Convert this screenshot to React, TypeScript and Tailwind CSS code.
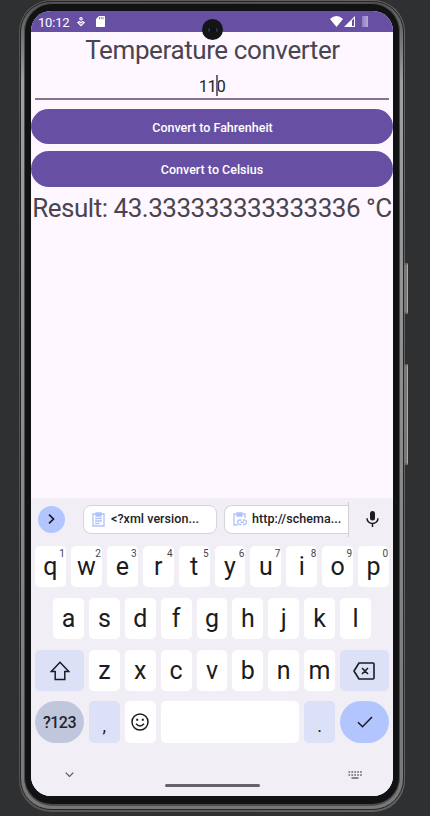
import type { ReactNode } from 'react';

const topRow = ['q', 'w', 'e', 'r', 't', 'y', 'u', 'i', 'o', 'p'];
const homeRow = ['a', 's', 'd', 'f', 'g', 'h', 'j', 'k', 'l'];
const lowRow = ['z', 'x', 'c', 'v', 'b', 'n', 'm'];

function Key({ label, hint }: { label: string; hint?: string }) {
  return (
    <div className="relative flex h-[41px] min-w-0 flex-1 items-center justify-center rounded-[5px] bg-white text-[25px] leading-none text-[#1b1b20]">
      <span>{label}</span>
      {hint && <span className="absolute right-[1px] top-[3px] text-[10px] leading-none text-[#44464e]">{hint}</span>}
    </div>
  );
}

function StatusBar() {
  return (
    <div className="relative flex h-[21px] shrink-0 items-center bg-[#6750a4] pl-[7px] text-white">
      <span className="w-[32px] whitespace-nowrap pt-px text-[13px] leading-none tracking-[-0.200px]">10:12</span>
      <svg className="ml-[7px] h-[10px] w-[8px]" viewBox="0 0 8 10" fill="none" stroke="white" strokeWidth="1.1">
        <circle cx="4" cy="1.8" r="1.2" />
        <path d="M4 6 2.4 4.5 .8 5.5 4 8.7 7.2 5.5 5.6 4.5Z" />
      </svg>
      <svg className="ml-[11px] h-[11px] w-[9px]" viewBox="0 0 9 11">
        <path d="M3 0h5.3q.7 0 .7.7v9.6q0 .7-.7.7H.7Q0 11 0 10.300V3Z" fill="white" />
        <path d="M3.500 1.200v2M5.300 1.200v2M7.100 1.200v2" stroke="#6750a4" strokeWidth=".8" />
      </svg>
      <div className="absolute left-[171px] top-[8px] flex h-[21px] w-[21px] items-center justify-center rounded-full bg-[#151518]">
        <span className="h-[4px] w-[10px] rounded-full border-x-2 border-[#263850] bg-[#0d1119]" />
      </div>
      <svg className="ml-auto h-[11px] w-[13px]" viewBox="0 0 13 11"><path d="M0 3Q6.500-3 13 3L6.500 11Z" fill="white" /></svg>
      <svg className="ml-[1px] h-[11px] w-[11px]" viewBox="0 0 11 11">
        <path d="M0 11 11 0v11Z" fill="white" /><path d="M8 4.500 10 2.500V10H8Z" fill="#6750a4" />
      </svg>
      <div className="ml-[7px] mr-[25px] h-[11px] w-[6px] bg-gradient-to-r from-[#917fc2] to-[#b5a8d8]" />
    </div>
  );
}

function Clip({ link = false }: { link?: boolean }) {
  return (
    <svg className="h-[15px] w-[14px] shrink-0" viewBox="0 0 14 15" fill="none" stroke="#afc3fc" strokeWidth="1.300">
      {link ? (
        <>
          <path d="M4.500 13H1V2h2.500M9.500 2H12v4" />
          <path d="M4 1h5v3H4Z" fill="#afc3fc" />
          <path d="M8.500 8H6.800a2.200 2.200 0 0 0 0 4.500h1.700M10 8h1.300a2.200 2.200 0 0 1 0 4.500H10M7.500 10.250h3.500" />
        </>
      ) : (
        <>
          <path d="M1 2h11v12H1Z" />
          <path d="M4 1h5v3H4Z" fill="#afc3fc" />
          <path d="M3 6.500h7M3 9h7M3 11.500h4.500" />
        </>
      )}
    </svg>
  );
}

function ActionKey({ children }: { children: ReactNode }) {
  return <div className="flex h-[41px] w-[49px] shrink-0 items-center justify-center rounded-[5px] bg-[#dce1f8]">{children}</div>;
}

function Keyboard() {
  return (
    <div className="flex h-[298px] shrink-0 flex-col bg-[#f1eff5]">
      <div className="flex h-[42px] shrink-0 items-center pl-[7px]">
        <div className="flex h-[27px] w-[27px] shrink-0 items-center justify-center rounded-full bg-[#b2c5ff]">
          <svg className="h-[10px] w-[7px]" viewBox="0 0 7 10" fill="none" stroke="#1b1b20" strokeWidth="1.700"><path d="m1 .7 4.500 4.300L1 9.300" /></svg>
        </div>
        <div className="ml-[18px] flex h-[29px] w-[134px] shrink-0 items-center rounded-[8px] border border-[#d5d4dc] bg-white pl-[8px]">
          <Clip />
          <span className="ml-[5px] whitespace-nowrap pt-px text-[12.500px] font-medium tracking-[0.050px] text-[#202126]">&lt;?xml version...</span>
        </div>
        <div className="ml-[7px] flex h-[35px] w-[125px] shrink-0 items-center border-r border-[#d0cfd6]">
          <div className="flex h-[29px] w-full items-center rounded-l-[8px] border border-r-0 border-[#d5d4dc] bg-white pl-[8px]">
            <Clip link />
            <span className="ml-[5px] whitespace-nowrap pt-px text-[12.500px] font-medium tracking-[0.050px] text-[#202126]">http://schema...</span>
          </div>
        </div>
        <svg className="ml-[17px] h-[16px] w-[13px]" viewBox="0 0 13 16">
          <rect x="4" y="0" width="5" height="9.500" rx="2.500" fill="#1b1b20" />
          <path d="M1 7.200a5.500 5.300 0 0 0 11 0M6.500 12.500V16" fill="none" stroke="#1b1b20" strokeWidth="1.500" />
        </svg>
      </div>

      <div className="mt-[6px] flex gap-[5px] px-[4px]">
        {topRow.map((k, i) => <Key key={k} label={k} hint={String((i + 1) % 10)} />)}
      </div>
      <div className="mt-[11px] flex gap-[5px] px-[22px]">
        {homeRow.map((k) => <Key key={k} label={k} />)}
      </div>
      <div className="mt-[11px] flex gap-[5px] px-[4px]">
        <ActionKey>
          <svg className="h-[20px] w-[20px]" viewBox="0 0 20 20" fill="none" stroke="#1b1b20" strokeWidth="1.500"><path d="M10 1.300 18.700 10.400H14.800V18.500H5.200V10.400H1.300Z" /></svg>
        </ActionKey>
        {lowRow.map((k) => <Key key={k} label={k} />)}
        <ActionKey>
          <svg className="mr-[2px] h-[18px] w-[22px]" viewBox="0 0 22 18" fill="none" stroke="#1b1b20" strokeWidth="1.600" strokeLinejoin="round">
            <path d="M6 1H20Q21 1 21 2V16Q21 17 20 17H6L1 9ZM9 6l6 6M15 6l-6 6" />
          </svg>
        </ActionKey>
      </div>
      <div className="mt-[10px] flex h-[42px] gap-[5px] px-[4px]">
        <div className="flex w-[49px] items-center justify-center rounded-[21px] bg-[#c0c6dc] pt-[2px] text-[16px] font-medium tracking-[-0.500px] text-[#202331]">?123</div>
        <div className="flex w-[30.500px] items-end justify-center rounded-[5px] bg-[#dce1f8] pb-[8px] text-[18px] leading-none text-[#1b1b20]">,</div>
        <div className="flex w-[31px] items-center justify-center rounded-[5px] bg-white">
          <svg className="h-[18px] w-[18px]" viewBox="0 0 18 18" fill="none" stroke="#1b1b20" strokeWidth="1.500">
            <circle cx="9" cy="9" r="8" /><path d="M5 10.800q4 4.400 8 0" /><path d="M5.200 6.700h2M10.800 6.700h2" strokeWidth="2" />
          </svg>
        </div>
        <div className="flex-1 rounded-[5px] bg-white" />
        <div className="flex w-[31px] items-end justify-center rounded-[5px] bg-[#dce1f8] pb-[8px] text-[18px] leading-none text-[#1b1b20]">.</div>
        <div className="flex w-[49px] items-center justify-center rounded-[21px] bg-[#b2c5ff]">
          <svg className="h-[12px] w-[16px]" viewBox="0 0 16 12" fill="none" stroke="#1b1b20" strokeWidth="1.600"><path d="m1 6.200 4.500 4.500L15 1" /></svg>
        </div>
      </div>
      <div className="flex flex-1 pl-[34px] pr-[31px]">
        <svg className="mt-[29px] h-[6px] w-[9px]" viewBox="0 0 9 6" fill="none" stroke="#55555b" strokeWidth="1.200"><path d="m.7.7 3.800 3.800L8.300.7" /></svg>
        <div className="mt-[41px] ml-[91px] h-[3px] w-[95px] rounded-full bg-[#656369]" />
        <svg className="mt-[28px] ml-auto h-[8px] w-[14px]" viewBox="0 0 14 8" stroke="#66656b">
          <path d="M.5 1H14M.5 4H14" strokeWidth="1.700" strokeDasharray="1.700 1.200" /><path d="M3.500 7h7" strokeWidth="1.300" />
        </svg>
      </div>
    </div>
  );
}

export default function App() {
  return (
    <main className="relative h-[816px] w-[430px] overflow-hidden bg-[#2f3032] pl-[19px] font-['Roboto',sans-serif]">
      <div className="h-[812px] w-[386px] rounded-[32px] bg-linear-to-r from-[#555555] to-[#626262] p-[1px] pb-[2px]">
        <div className="h-full rounded-[31px] border-[1px] border-[#252525] bg-linear-to-b from-[#555555] via-[#a0a0a0] via-10% to-[#777777] pt-[1px] pr-[3px] pb-[3px] pl-[3px]">
          <div className="h-full rounded-[28px] border-[1px] border-b-[2px] border-[#4b4b4b] bg-[#111213] px-[6px] pt-[7px] pb-[7px]">
            <div className="flex h-[785px] w-[362px] flex-col overflow-hidden rounded-[20px] bg-[#fef7ff]">
              <StatusBar />
              <h1 className="h-[36px] whitespace-nowrap pl-[1px] text-center text-[26px] leading-[37px] tracking-[-0.400px] text-[#49454f]">Temperature converter</h1>
              <div className="relative mx-[4px] mt-[8px] h-[24px] border-b-2 border-[#817789] text-center text-[16.500px] leading-[21px] tracking-[-0.400px] text-[#25232a]">
                110<span className="absolute left-[181px] top-[-1px] h-[21px] w-[2px] bg-[#6f6780]" />
              </div>
              <button className="mt-[9px] h-[35px] shrink-0 rounded-full bg-[#6750a4] pt-[3px] pl-[1px] text-[12.500px] font-medium text-white">Convert to Fahrenheit</button>
              <button className="mt-[7px] h-[36px] shrink-0 rounded-full bg-[#6750a4] pt-[2px] text-[12.500px] font-medium text-white">Convert to Celsius</button>
              <p className="h-[40px] whitespace-nowrap text-center text-[26px] leading-[42px] tracking-[-0.480px] text-[#49454f]">Result: 43.333333333333336 °C</p>
              <div className="flex-1" />
              <Keyboard />
            </div>
          </div>
        </div>
      </div>
      <div className="absolute left-[404px] top-[263px] h-[51px] w-[4px] rounded-r-[1px] border-y-2 border-r border-[#676767] border-r-[#aaaaaa] bg-[#777777]" />
      <div className="absolute left-[404px] top-[364px] h-[101px] w-[4px] rounded-r-[1px] border-y-2 border-r border-[#676767] border-r-[#aaaaaa] bg-[#777777]" />
    </main>
  );
}
